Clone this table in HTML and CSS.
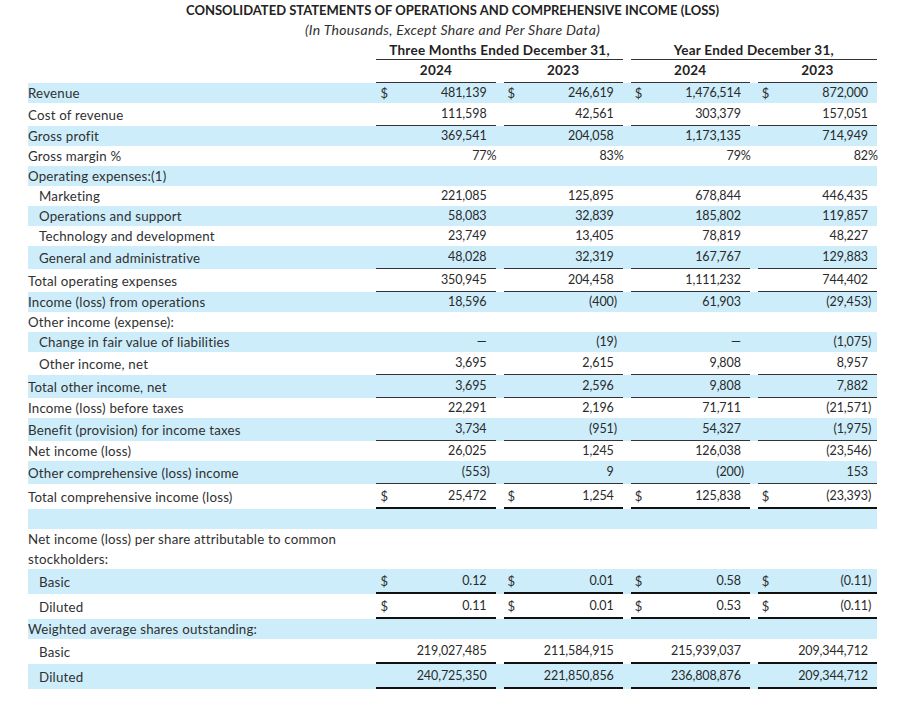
FILE: index.html
```html
<!DOCTYPE html>
<html>
<head>
<meta charset="utf-8">
<link rel="stylesheet" href="styles.css">
</head>
<body>
<div class="page">
  <div class="title">CONSOLIDATED STATEMENTS OF OPERATIONS AND COMPREHENSIVE INCOME (LOSS)</div>
  <div class="subtitle">(In Thousands, Except Share and Per Share Data)</div>
  <table class="fin">
    <colgroup><col class="c-label"><col class="c-val"><col class="c-val"><col class="c-val"><col class="c-val"></colgroup>
    <thead>
      <tr class="grp"><th></th><th colspan="2"><div class="cell hc">Three Months Ended December 31,</div></th><th colspan="2"><div class="cell hc">Year Ended December 31,</div></th></tr>
      <tr class="yr"><th></th><th><div class="cell hc">2024</div></th><th><div class="cell hc">2023</div></th><th><div class="cell hc">2024</div></th><th><div class="cell hc">2023</div></th></tr>
    </thead>
    <tbody>
      <tr class="b"><td class="lbl">Revenue</td>
        <td><div class="cell"><span class="cur">$</span><span class="num">481,139</span></div></td>
        <td><div class="cell"><span class="cur">$</span><span class="num">246,619</span></div></td>
        <td><div class="cell"><span class="cur">$</span><span class="num">1,476,514</span></div></td>
        <td><div class="cell"><span class="cur">$</span><span class="num">872,000</span></div></td></tr>
      <tr class="u1"><td class="lbl">Cost of revenue</td>
        <td><div class="cell"><span class="num">111,598</span></div></td>
        <td><div class="cell"><span class="num">42,561</span></div></td>
        <td><div class="cell"><span class="num">303,379</span></div></td>
        <td><div class="cell"><span class="num">157,051</span></div></td></tr>
      <tr class="b"><td class="lbl">Gross profit</td>
        <td><div class="cell"><span class="num">369,541</span></div></td>
        <td><div class="cell"><span class="num">204,058</span></div></td>
        <td><div class="cell"><span class="num">1,173,135</span></div></td>
        <td><div class="cell"><span class="num">714,949</span></div></td></tr>
      <tr><td class="lbl">Gross margin %</td>
        <td><div class="cell"><span class="num">77<span class="sfx">%</span></span></div></td>
        <td><div class="cell"><span class="num">83<span class="sfx">%</span></span></div></td>
        <td><div class="cell"><span class="num">79<span class="sfx">%</span></span></div></td>
        <td><div class="cell"><span class="num">82<span class="sfx">%</span></span></div></td></tr>
      <tr class="b"><td class="lbl">Operating expenses:(1)</td>
        <td><div class="cell"></div></td><td><div class="cell"></div></td><td><div class="cell"></div></td><td><div class="cell"></div></td></tr>
      <tr><td class="lbl ind">Marketing</td>
        <td><div class="cell"><span class="num">221,085</span></div></td>
        <td><div class="cell"><span class="num">125,895</span></div></td>
        <td><div class="cell"><span class="num">678,844</span></div></td>
        <td><div class="cell"><span class="num">446,435</span></div></td></tr>
      <tr class="b"><td class="lbl ind">Operations and support</td>
        <td><div class="cell"><span class="num">58,083</span></div></td>
        <td><div class="cell"><span class="num">32,839</span></div></td>
        <td><div class="cell"><span class="num">185,802</span></div></td>
        <td><div class="cell"><span class="num">119,857</span></div></td></tr>
      <tr><td class="lbl ind">Technology and development</td>
        <td><div class="cell"><span class="num">23,749</span></div></td>
        <td><div class="cell"><span class="num">13,405</span></div></td>
        <td><div class="cell"><span class="num">78,819</span></div></td>
        <td><div class="cell"><span class="num">48,227</span></div></td></tr>
      <tr class="b u1"><td class="lbl ind">General and administrative</td>
        <td><div class="cell"><span class="num">48,028</span></div></td>
        <td><div class="cell"><span class="num">32,319</span></div></td>
        <td><div class="cell"><span class="num">167,767</span></div></td>
        <td><div class="cell"><span class="num">129,883</span></div></td></tr>
      <tr class="u1"><td class="lbl">Total operating expenses</td>
        <td><div class="cell"><span class="num">350,945</span></div></td>
        <td><div class="cell"><span class="num">204,458</span></div></td>
        <td><div class="cell"><span class="num">1,111,232</span></div></td>
        <td><div class="cell"><span class="num">744,402</span></div></td></tr>
      <tr class="b"><td class="lbl">Income (loss) from operations</td>
        <td><div class="cell"><span class="num">18,596</span></div></td>
        <td><div class="cell"><span class="num">(400<span class="sfx">)</span></span></div></td>
        <td><div class="cell"><span class="num">61,903</span></div></td>
        <td><div class="cell"><span class="num">(29,453<span class="sfx">)</span></span></div></td></tr>
      <tr><td class="lbl">Other income (expense):</td>
        <td><div class="cell"></div></td><td><div class="cell"></div></td><td><div class="cell"></div></td><td><div class="cell"></div></td></tr>
      <tr class="b"><td class="lbl ind">Change in fair value of liabilities</td>
        <td><div class="cell"><span class="num">—</span></div></td>
        <td><div class="cell"><span class="num">(19<span class="sfx">)</span></span></div></td>
        <td><div class="cell"><span class="num">—</span></div></td>
        <td><div class="cell"><span class="num">(1,075<span class="sfx">)</span></span></div></td></tr>
      <tr class="u1"><td class="lbl ind">Other income, net</td>
        <td><div class="cell"><span class="num">3,695</span></div></td>
        <td><div class="cell"><span class="num">2,615</span></div></td>
        <td><div class="cell"><span class="num">9,808</span></div></td>
        <td><div class="cell"><span class="num">8,957</span></div></td></tr>
      <tr class="b u1"><td class="lbl">Total other income, net</td>
        <td><div class="cell"><span class="num">3,695</span></div></td>
        <td><div class="cell"><span class="num">2,596</span></div></td>
        <td><div class="cell"><span class="num">9,808</span></div></td>
        <td><div class="cell"><span class="num">7,882</span></div></td></tr>
      <tr><td class="lbl">Income (loss) before taxes</td>
        <td><div class="cell"><span class="num">22,291</span></div></td>
        <td><div class="cell"><span class="num">2,196</span></div></td>
        <td><div class="cell"><span class="num">71,711</span></div></td>
        <td><div class="cell"><span class="num">(21,571<span class="sfx">)</span></span></div></td></tr>
      <tr class="b u1"><td class="lbl">Benefit (provision) for income taxes</td>
        <td><div class="cell"><span class="num">3,734</span></div></td>
        <td><div class="cell"><span class="num">(951<span class="sfx">)</span></span></div></td>
        <td><div class="cell"><span class="num">54,327</span></div></td>
        <td><div class="cell"><span class="num">(1,975<span class="sfx">)</span></span></div></td></tr>
      <tr><td class="lbl">Net income (loss)</td>
        <td><div class="cell"><span class="num">26,025</span></div></td>
        <td><div class="cell"><span class="num">1,245</span></div></td>
        <td><div class="cell"><span class="num">126,038</span></div></td>
        <td><div class="cell"><span class="num">(23,546<span class="sfx">)</span></span></div></td></tr>
      <tr class="b u1"><td class="lbl">Other comprehensive (loss) income</td>
        <td><div class="cell"><span class="num">(553<span class="sfx">)</span></span></div></td>
        <td><div class="cell"><span class="num">9</span></div></td>
        <td><div class="cell"><span class="num">(200<span class="sfx">)</span></span></div></td>
        <td><div class="cell"><span class="num">153</span></div></td></tr>
      <tr class="u2"><td class="lbl">Total comprehensive income (loss)</td>
        <td><div class="cell"><span class="cur">$</span><span class="num">25,472</span></div></td>
        <td><div class="cell"><span class="cur">$</span><span class="num">1,254</span></div></td>
        <td><div class="cell"><span class="cur">$</span><span class="num">125,838</span></div></td>
        <td><div class="cell"><span class="cur">$</span><span class="num">(23,393<span class="sfx">)</span></span></div></td></tr>
      <tr class="b gap"><td class="lbl"></td>
        <td><div class="cell"></div></td><td><div class="cell"></div></td><td><div class="cell"></div></td><td><div class="cell"></div></td></tr>
      <tr class="two"><td class="lbl">Net income (loss) per share attributable to common stockholders:</td>
        <td></td><td></td><td></td><td></td></tr>
      <tr class="b u2"><td class="lbl ind">Basic</td>
        <td><div class="cell"><span class="cur">$</span><span class="num">0.12</span></div></td>
        <td><div class="cell"><span class="cur">$</span><span class="num">0.01</span></div></td>
        <td><div class="cell"><span class="cur">$</span><span class="num">0.58</span></div></td>
        <td><div class="cell"><span class="cur">$</span><span class="num">(0.11<span class="sfx">)</span></span></div></td></tr>
      <tr class="u2"><td class="lbl ind">Diluted</td>
        <td><div class="cell"><span class="cur">$</span><span class="num">0.11</span></div></td>
        <td><div class="cell"><span class="cur">$</span><span class="num">0.01</span></div></td>
        <td><div class="cell"><span class="cur">$</span><span class="num">0.53</span></div></td>
        <td><div class="cell"><span class="cur">$</span><span class="num">(0.11<span class="sfx">)</span></span></div></td></tr>
      <tr class="b"><td class="lbl">Weighted average shares outstanding:</td>
        <td><div class="cell"></div></td><td><div class="cell"></div></td><td><div class="cell"></div></td><td><div class="cell"></div></td></tr>
      <tr class="u2"><td class="lbl ind">Basic</td>
        <td><div class="cell"><span class="num">219,027,485</span></div></td>
        <td><div class="cell"><span class="num">211,584,915</span></div></td>
        <td><div class="cell"><span class="num">215,939,037</span></div></td>
        <td><div class="cell"><span class="num">209,344,712</span></div></td></tr>
      <tr class="b u2"><td class="lbl ind">Diluted</td>
        <td><div class="cell"><span class="num">240,725,350</span></div></td>
        <td><div class="cell"><span class="num">221,850,856</span></div></td>
        <td><div class="cell"><span class="num">236,808,876</span></div></td>
        <td><div class="cell"><span class="num">209,344,712</span></div></td></tr>
    </tbody>
  </table>
</div>
</body>
</html>
```
FILE: styles.css
```css
body {
  margin: 0;
  background: #ffffff;
  color: #303030;
  font-family: Lato, "Open Sans", sans-serif;
  font-size: 13.3px;
  letter-spacing: 0.2px;
}
.page {
  width: 849px;
  margin-left: 28px;
}
.title {
  text-align: center;
  font-weight: 700;
  font-size: 13px;
  letter-spacing: 0;
  line-height: 20px;
  color: #222;
}
.subtitle {
  text-align: center;
  font-style: italic;
  font-size: 14px;
  letter-spacing: 0.3px;
  line-height: 20px;
}
table.fin {
  border-collapse: separate;
  border-spacing: 0;
  width: 849px;
  table-layout: fixed;
}
col.c-label { width: 340px; }
col.c-val { width: 127px; }
th, td {
  padding: 0 0 0 8px;
  vertical-align: middle;
  font-weight: 400;
}
td.lbl { padding-left: 0; line-height: 20px; white-space: nowrap; }
td.lbl.ind { padding-left: 11px; }
tr.b { background: #cdedfb; }
.cell {
  display: flex;
  justify-content: space-between;
  align-items: center;
  height: 20px;
  line-height: 20px;
}
.cur { padding-left: 4px; font-size: 13px; }
.num { margin-left: auto; padding-right: 9px; font-size: 12.5px; letter-spacing: -0.1px; color: #2a2a2a; white-space: nowrap; }
.sfx { display: inline-block; width: 0; }
.hc { justify-content: center; font-weight: 700; color: #222; font-size: 13.5px; letter-spacing: 0.25px; }
tr.grp .cell { height: 19px; border-bottom: 1px solid #333; }
tr.yr .cell { height: 20px; padding-bottom: 2px; border-bottom: 1px solid #333; }
tr.u1 .cell { padding: 1px 0; border-bottom: 1px solid #333; }
tr.u2 .cell { padding: 2px 0 1px; border-bottom: 2px solid #111; }
tr.two td.lbl { white-space: normal; height: 40px; padding-right: 0; }
```
